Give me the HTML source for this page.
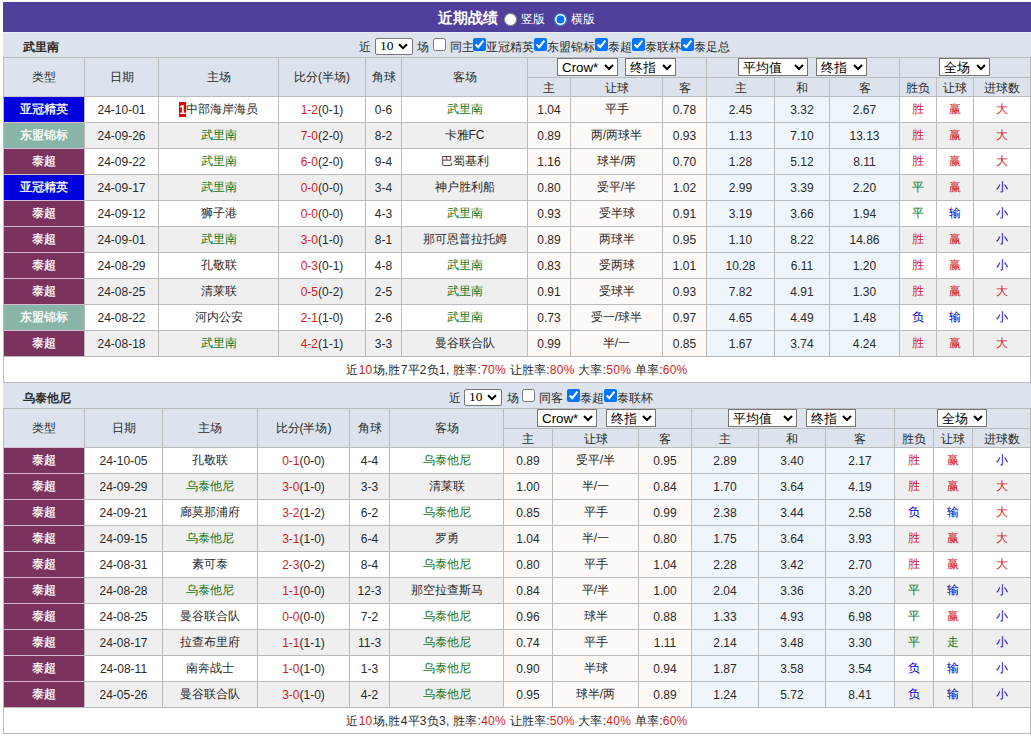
<!DOCTYPE html><html><head><meta charset="utf-8"><style>
html,body{margin:0;padding:0;}
body{width:1031px;height:736px;position:relative;overflow:hidden;background:#fff;font-family:"Liberation Sans",sans-serif;font-size:12px;color:#2a2a2a;font-weight:500;}
.a{position:absolute;}
.c{position:absolute;box-sizing:border-box;border:1px solid #bbb;display:flex;align-items:center;justify-content:center;white-space:nowrap;}
.s{position:absolute;box-sizing:border-box;margin:0;padding:0;font-family:"Liberation Sans",sans-serif;font-size:13.33px;background:#fff;color:#000;}
.k{position:absolute;margin:0;width:13px;height:13px;}
.d{padding-top:0px;}
.t{font-weight:500;-webkit-text-stroke:0.3px #fff;border-color:#d4bcd0 #e2e2ea #d4bcd0 #bbb;}
.rk{background:#e00;color:#fff;display:inline-block;width:7px;height:15px;line-height:16px;text-align:center;font-weight:bold;vertical-align:top;margin-top:1px;}
</style></head><body>
<div class="a" style="left:3px;top:2px;width:1028px;height:30px;background:#51409b;"></div>
<div class="a" style="left:3px;top:32px;width:1028px;height:1px;background:#e6e8f6;z-index:1;"></div>
<div class="a" style="left:438px;top:3px;height:30px;line-height:30px;color:#fff;font-weight:bold;font-size:15px;">近期战绩</div>
<div class="a" style="left:521px;top:4px;height:30px;line-height:31px;color:#fff;">竖版</div>
<div class="a" style="left:571px;top:4px;height:30px;line-height:31px;color:#fff;">横版</div>
<div class="a" style="left:3px;top:32px;width:1028px;height:25px;background:#dce3ec;"></div>
<div class="a" style="left:23px;top:32px;height:25px;line-height:31px;font-weight:bold;">武里南</div>
<div class="c" style="left:3px;top:57px;width:82px;height:40px;background:#dce3ec;"><span>类型</span></div>
<div class="c" style="left:84px;top:57px;width:75px;height:40px;background:#dce3ec;"><span>日期</span></div>
<div class="c" style="left:158px;top:57px;width:121px;height:40px;background:#dce3ec;"><span>主场</span></div>
<div class="c" style="left:278px;top:57px;width:88px;height:40px;background:#dce3ec;"><span>比分(半场)</span></div>
<div class="c" style="left:365px;top:57px;width:37px;height:40px;background:#dce3ec;"><span>角球</span></div>
<div class="c" style="left:401px;top:57px;width:127px;height:40px;background:#dce3ec;"><span>客场</span></div>
<div class="c" style="left:527px;top:57px;width:180px;height:21px;background:#dce3ec;"></div>
<div class="c" style="left:706px;top:57px;width:194px;height:21px;background:#dce3ec;"></div>
<div class="c" style="left:899px;top:57px;width:132px;height:21px;background:#dce3ec;"></div>
<div class="c" style="left:527px;top:77px;width:44px;height:20px;background:#dce3ec;padding-top:3px;"><span>主</span></div>
<div class="c" style="left:570px;top:77px;width:93px;height:20px;background:#dce3ec;padding-top:3px;"><span>让球</span></div>
<div class="c" style="left:662px;top:77px;width:45px;height:20px;background:#dce3ec;padding-top:3px;"><span>客</span></div>
<div class="c" style="left:706px;top:77px;width:69px;height:20px;background:#dce3ec;padding-top:3px;"><span>主</span></div>
<div class="c" style="left:774px;top:77px;width:56px;height:20px;background:#dce3ec;padding-top:3px;"><span>和</span></div>
<div class="c" style="left:829px;top:77px;width:71px;height:20px;background:#dce3ec;padding-top:3px;"><span>客</span></div>
<div class="c" style="left:899px;top:77px;width:38px;height:20px;background:#dce3ec;padding-top:3px;"><span>胜负</span></div>
<div class="c" style="left:936px;top:77px;width:38px;height:20px;background:#dce3ec;padding-top:3px;"><span>让球</span></div>
<div class="c" style="left:973px;top:77px;width:58px;height:20px;background:#dce3ec;padding-top:3px;"><span>进球数</span></div>
<div class="c t d" style="left:3px;top:96px;width:82px;height:27px;background:#0000dd;color:#fff;"><span>亚冠精英</span></div>
<div class="c d" style="left:84px;top:96px;width:75px;height:27px;background:#fff;"><span>24-10-01</span></div>
<div class="c d" style="left:158px;top:96px;width:121px;height:27px;background:#fff;"><span><span class="rk">1</span>中部海岸海员</span></div>
<div class="c d" style="left:278px;top:96px;width:88px;height:27px;background:#fff;"><span><span style="color:#d41a1a">1-2</span>(0-1)</span></div>
<div class="c d" style="left:365px;top:96px;width:37px;height:27px;background:#fff;"><span>0-6</span></div>
<div class="c d" style="left:401px;top:96px;width:127px;height:27px;background:#fff;color:#157315;"><span>武里南</span></div>
<div class="c d" style="left:527px;top:96px;width:44px;height:27px;background:#fdf9f6;"><span>1.04</span></div>
<div class="c d" style="left:570px;top:96px;width:93px;height:27px;background:#fdf9f6;"><span>平手</span></div>
<div class="c d" style="left:662px;top:96px;width:45px;height:27px;background:#fdf9f6;"><span>0.78</span></div>
<div class="c d" style="left:706px;top:96px;width:69px;height:27px;background:#eff6fb;"><span>2.45</span></div>
<div class="c d" style="left:774px;top:96px;width:56px;height:27px;background:#eff6fb;"><span>3.32</span></div>
<div class="c d" style="left:829px;top:96px;width:71px;height:27px;background:#eff6fb;"><span>2.67</span></div>
<div class="c d" style="left:899px;top:96px;width:38px;height:27px;background:#fff;color:#d41a1a;"><span>胜</span></div>
<div class="c d" style="left:936px;top:96px;width:38px;height:27px;background:#fff;color:#d41a1a;"><span>赢</span></div>
<div class="c d" style="left:973px;top:96px;width:58px;height:27px;background:#fff;color:#d41a1a;"><span>大</span></div>
<div class="c t d" style="left:3px;top:122px;width:82px;height:27px;background:#88b5a8;color:#fff;"><span>东盟锦标</span></div>
<div class="c d" style="left:84px;top:122px;width:75px;height:27px;background:#efefef;"><span>24-09-26</span></div>
<div class="c d" style="left:158px;top:122px;width:121px;height:27px;background:#efefef;color:#157315;"><span>武里南</span></div>
<div class="c d" style="left:278px;top:122px;width:88px;height:27px;background:#efefef;"><span><span style="color:#d41a1a">7-0</span>(2-0)</span></div>
<div class="c d" style="left:365px;top:122px;width:37px;height:27px;background:#efefef;"><span>8-2</span></div>
<div class="c d" style="left:401px;top:122px;width:127px;height:27px;background:#efefef;"><span>卡雅FC</span></div>
<div class="c d" style="left:527px;top:122px;width:44px;height:27px;background:#fdf9f6;"><span>0.89</span></div>
<div class="c d" style="left:570px;top:122px;width:93px;height:27px;background:#fdf9f6;"><span>两/两球半</span></div>
<div class="c d" style="left:662px;top:122px;width:45px;height:27px;background:#fdf9f6;"><span>0.93</span></div>
<div class="c d" style="left:706px;top:122px;width:69px;height:27px;background:#eff6fb;"><span>1.13</span></div>
<div class="c d" style="left:774px;top:122px;width:56px;height:27px;background:#eff6fb;"><span>7.10</span></div>
<div class="c d" style="left:829px;top:122px;width:71px;height:27px;background:#eff6fb;"><span>13.13</span></div>
<div class="c d" style="left:899px;top:122px;width:38px;height:27px;background:#efefef;color:#d41a1a;"><span>胜</span></div>
<div class="c d" style="left:936px;top:122px;width:38px;height:27px;background:#efefef;color:#d41a1a;"><span>赢</span></div>
<div class="c d" style="left:973px;top:122px;width:58px;height:27px;background:#efefef;color:#d41a1a;"><span>大</span></div>
<div class="c t d" style="left:3px;top:148px;width:82px;height:27px;background:#7b335e;color:#fff;"><span>泰超</span></div>
<div class="c d" style="left:84px;top:148px;width:75px;height:27px;background:#fff;"><span>24-09-22</span></div>
<div class="c d" style="left:158px;top:148px;width:121px;height:27px;background:#fff;color:#157315;"><span>武里南</span></div>
<div class="c d" style="left:278px;top:148px;width:88px;height:27px;background:#fff;"><span><span style="color:#d41a1a">6-0</span>(2-0)</span></div>
<div class="c d" style="left:365px;top:148px;width:37px;height:27px;background:#fff;"><span>9-4</span></div>
<div class="c d" style="left:401px;top:148px;width:127px;height:27px;background:#fff;"><span>巴蜀基利</span></div>
<div class="c d" style="left:527px;top:148px;width:44px;height:27px;background:#fdf9f6;"><span>1.16</span></div>
<div class="c d" style="left:570px;top:148px;width:93px;height:27px;background:#fdf9f6;"><span>球半/两</span></div>
<div class="c d" style="left:662px;top:148px;width:45px;height:27px;background:#fdf9f6;"><span>0.70</span></div>
<div class="c d" style="left:706px;top:148px;width:69px;height:27px;background:#eff6fb;"><span>1.28</span></div>
<div class="c d" style="left:774px;top:148px;width:56px;height:27px;background:#eff6fb;"><span>5.12</span></div>
<div class="c d" style="left:829px;top:148px;width:71px;height:27px;background:#eff6fb;"><span>8.11</span></div>
<div class="c d" style="left:899px;top:148px;width:38px;height:27px;background:#fff;color:#d41a1a;"><span>胜</span></div>
<div class="c d" style="left:936px;top:148px;width:38px;height:27px;background:#fff;color:#d41a1a;"><span>赢</span></div>
<div class="c d" style="left:973px;top:148px;width:58px;height:27px;background:#fff;color:#d41a1a;"><span>大</span></div>
<div class="c t d" style="left:3px;top:174px;width:82px;height:27px;background:#0000dd;color:#fff;"><span>亚冠精英</span></div>
<div class="c d" style="left:84px;top:174px;width:75px;height:27px;background:#efefef;"><span>24-09-17</span></div>
<div class="c d" style="left:158px;top:174px;width:121px;height:27px;background:#efefef;color:#157315;"><span>武里南</span></div>
<div class="c d" style="left:278px;top:174px;width:88px;height:27px;background:#efefef;"><span><span style="color:#d41a1a">0-0</span>(0-0)</span></div>
<div class="c d" style="left:365px;top:174px;width:37px;height:27px;background:#efefef;"><span>3-4</span></div>
<div class="c d" style="left:401px;top:174px;width:127px;height:27px;background:#efefef;"><span>神户胜利船</span></div>
<div class="c d" style="left:527px;top:174px;width:44px;height:27px;background:#fdf9f6;"><span>0.80</span></div>
<div class="c d" style="left:570px;top:174px;width:93px;height:27px;background:#fdf9f6;"><span>受平/半</span></div>
<div class="c d" style="left:662px;top:174px;width:45px;height:27px;background:#fdf9f6;"><span>1.02</span></div>
<div class="c d" style="left:706px;top:174px;width:69px;height:27px;background:#eff6fb;"><span>2.99</span></div>
<div class="c d" style="left:774px;top:174px;width:56px;height:27px;background:#eff6fb;"><span>3.39</span></div>
<div class="c d" style="left:829px;top:174px;width:71px;height:27px;background:#eff6fb;"><span>2.20</span></div>
<div class="c d" style="left:899px;top:174px;width:38px;height:27px;background:#efefef;color:#157315;"><span>平</span></div>
<div class="c d" style="left:936px;top:174px;width:38px;height:27px;background:#efefef;color:#d41a1a;"><span>赢</span></div>
<div class="c d" style="left:973px;top:174px;width:58px;height:27px;background:#efefef;color:#0000cc;"><span>小</span></div>
<div class="c t d" style="left:3px;top:200px;width:82px;height:27px;background:#7b335e;color:#fff;"><span>泰超</span></div>
<div class="c d" style="left:84px;top:200px;width:75px;height:27px;background:#fff;"><span>24-09-12</span></div>
<div class="c d" style="left:158px;top:200px;width:121px;height:27px;background:#fff;"><span>狮子港</span></div>
<div class="c d" style="left:278px;top:200px;width:88px;height:27px;background:#fff;"><span><span style="color:#d41a1a">0-0</span>(0-0)</span></div>
<div class="c d" style="left:365px;top:200px;width:37px;height:27px;background:#fff;"><span>4-3</span></div>
<div class="c d" style="left:401px;top:200px;width:127px;height:27px;background:#fff;color:#157315;"><span>武里南</span></div>
<div class="c d" style="left:527px;top:200px;width:44px;height:27px;background:#fdf9f6;"><span>0.93</span></div>
<div class="c d" style="left:570px;top:200px;width:93px;height:27px;background:#fdf9f6;"><span>受半球</span></div>
<div class="c d" style="left:662px;top:200px;width:45px;height:27px;background:#fdf9f6;"><span>0.91</span></div>
<div class="c d" style="left:706px;top:200px;width:69px;height:27px;background:#eff6fb;"><span>3.19</span></div>
<div class="c d" style="left:774px;top:200px;width:56px;height:27px;background:#eff6fb;"><span>3.66</span></div>
<div class="c d" style="left:829px;top:200px;width:71px;height:27px;background:#eff6fb;"><span>1.94</span></div>
<div class="c d" style="left:899px;top:200px;width:38px;height:27px;background:#fff;color:#157315;"><span>平</span></div>
<div class="c d" style="left:936px;top:200px;width:38px;height:27px;background:#fff;color:#0000cc;"><span>输</span></div>
<div class="c d" style="left:973px;top:200px;width:58px;height:27px;background:#fff;color:#0000cc;"><span>小</span></div>
<div class="c t d" style="left:3px;top:226px;width:82px;height:27px;background:#7b335e;color:#fff;"><span>泰超</span></div>
<div class="c d" style="left:84px;top:226px;width:75px;height:27px;background:#efefef;"><span>24-09-01</span></div>
<div class="c d" style="left:158px;top:226px;width:121px;height:27px;background:#efefef;color:#157315;"><span>武里南</span></div>
<div class="c d" style="left:278px;top:226px;width:88px;height:27px;background:#efefef;"><span><span style="color:#d41a1a">3-0</span>(1-0)</span></div>
<div class="c d" style="left:365px;top:226px;width:37px;height:27px;background:#efefef;"><span>8-1</span></div>
<div class="c d" style="left:401px;top:226px;width:127px;height:27px;background:#efefef;"><span>那可恩普拉托姆</span></div>
<div class="c d" style="left:527px;top:226px;width:44px;height:27px;background:#fdf9f6;"><span>0.89</span></div>
<div class="c d" style="left:570px;top:226px;width:93px;height:27px;background:#fdf9f6;"><span>两球半</span></div>
<div class="c d" style="left:662px;top:226px;width:45px;height:27px;background:#fdf9f6;"><span>0.95</span></div>
<div class="c d" style="left:706px;top:226px;width:69px;height:27px;background:#eff6fb;"><span>1.10</span></div>
<div class="c d" style="left:774px;top:226px;width:56px;height:27px;background:#eff6fb;"><span>8.22</span></div>
<div class="c d" style="left:829px;top:226px;width:71px;height:27px;background:#eff6fb;"><span>14.86</span></div>
<div class="c d" style="left:899px;top:226px;width:38px;height:27px;background:#efefef;color:#d41a1a;"><span>胜</span></div>
<div class="c d" style="left:936px;top:226px;width:38px;height:27px;background:#efefef;color:#d41a1a;"><span>赢</span></div>
<div class="c d" style="left:973px;top:226px;width:58px;height:27px;background:#efefef;color:#0000cc;"><span>小</span></div>
<div class="c t d" style="left:3px;top:252px;width:82px;height:27px;background:#7b335e;color:#fff;"><span>泰超</span></div>
<div class="c d" style="left:84px;top:252px;width:75px;height:27px;background:#fff;"><span>24-08-29</span></div>
<div class="c d" style="left:158px;top:252px;width:121px;height:27px;background:#fff;"><span>孔敬联</span></div>
<div class="c d" style="left:278px;top:252px;width:88px;height:27px;background:#fff;"><span><span style="color:#d41a1a">0-3</span>(0-1)</span></div>
<div class="c d" style="left:365px;top:252px;width:37px;height:27px;background:#fff;"><span>4-8</span></div>
<div class="c d" style="left:401px;top:252px;width:127px;height:27px;background:#fff;color:#157315;"><span>武里南</span></div>
<div class="c d" style="left:527px;top:252px;width:44px;height:27px;background:#fdf9f6;"><span>0.83</span></div>
<div class="c d" style="left:570px;top:252px;width:93px;height:27px;background:#fdf9f6;"><span>受两球</span></div>
<div class="c d" style="left:662px;top:252px;width:45px;height:27px;background:#fdf9f6;"><span>1.01</span></div>
<div class="c d" style="left:706px;top:252px;width:69px;height:27px;background:#eff6fb;"><span>10.28</span></div>
<div class="c d" style="left:774px;top:252px;width:56px;height:27px;background:#eff6fb;"><span>6.11</span></div>
<div class="c d" style="left:829px;top:252px;width:71px;height:27px;background:#eff6fb;"><span>1.20</span></div>
<div class="c d" style="left:899px;top:252px;width:38px;height:27px;background:#fff;color:#d41a1a;"><span>胜</span></div>
<div class="c d" style="left:936px;top:252px;width:38px;height:27px;background:#fff;color:#d41a1a;"><span>赢</span></div>
<div class="c d" style="left:973px;top:252px;width:58px;height:27px;background:#fff;color:#0000cc;"><span>小</span></div>
<div class="c t d" style="left:3px;top:278px;width:82px;height:27px;background:#7b335e;color:#fff;"><span>泰超</span></div>
<div class="c d" style="left:84px;top:278px;width:75px;height:27px;background:#efefef;"><span>24-08-25</span></div>
<div class="c d" style="left:158px;top:278px;width:121px;height:27px;background:#efefef;"><span>清莱联</span></div>
<div class="c d" style="left:278px;top:278px;width:88px;height:27px;background:#efefef;"><span><span style="color:#d41a1a">0-5</span>(0-2)</span></div>
<div class="c d" style="left:365px;top:278px;width:37px;height:27px;background:#efefef;"><span>2-5</span></div>
<div class="c d" style="left:401px;top:278px;width:127px;height:27px;background:#efefef;color:#157315;"><span>武里南</span></div>
<div class="c d" style="left:527px;top:278px;width:44px;height:27px;background:#fdf9f6;"><span>0.91</span></div>
<div class="c d" style="left:570px;top:278px;width:93px;height:27px;background:#fdf9f6;"><span>受球半</span></div>
<div class="c d" style="left:662px;top:278px;width:45px;height:27px;background:#fdf9f6;"><span>0.93</span></div>
<div class="c d" style="left:706px;top:278px;width:69px;height:27px;background:#eff6fb;"><span>7.82</span></div>
<div class="c d" style="left:774px;top:278px;width:56px;height:27px;background:#eff6fb;"><span>4.91</span></div>
<div class="c d" style="left:829px;top:278px;width:71px;height:27px;background:#eff6fb;"><span>1.30</span></div>
<div class="c d" style="left:899px;top:278px;width:38px;height:27px;background:#efefef;color:#d41a1a;"><span>胜</span></div>
<div class="c d" style="left:936px;top:278px;width:38px;height:27px;background:#efefef;color:#d41a1a;"><span>赢</span></div>
<div class="c d" style="left:973px;top:278px;width:58px;height:27px;background:#efefef;color:#d41a1a;"><span>大</span></div>
<div class="c t d" style="left:3px;top:304px;width:82px;height:27px;background:#88b5a8;color:#fff;"><span>东盟锦标</span></div>
<div class="c d" style="left:84px;top:304px;width:75px;height:27px;background:#fff;"><span>24-08-22</span></div>
<div class="c d" style="left:158px;top:304px;width:121px;height:27px;background:#fff;"><span>河内公安</span></div>
<div class="c d" style="left:278px;top:304px;width:88px;height:27px;background:#fff;"><span><span style="color:#d41a1a">2-1</span>(1-0)</span></div>
<div class="c d" style="left:365px;top:304px;width:37px;height:27px;background:#fff;"><span>2-6</span></div>
<div class="c d" style="left:401px;top:304px;width:127px;height:27px;background:#fff;color:#157315;"><span>武里南</span></div>
<div class="c d" style="left:527px;top:304px;width:44px;height:27px;background:#fdf9f6;"><span>0.73</span></div>
<div class="c d" style="left:570px;top:304px;width:93px;height:27px;background:#fdf9f6;"><span>受一/球半</span></div>
<div class="c d" style="left:662px;top:304px;width:45px;height:27px;background:#fdf9f6;"><span>0.97</span></div>
<div class="c d" style="left:706px;top:304px;width:69px;height:27px;background:#eff6fb;"><span>4.65</span></div>
<div class="c d" style="left:774px;top:304px;width:56px;height:27px;background:#eff6fb;"><span>4.49</span></div>
<div class="c d" style="left:829px;top:304px;width:71px;height:27px;background:#eff6fb;"><span>1.48</span></div>
<div class="c d" style="left:899px;top:304px;width:38px;height:27px;background:#fff;color:#0000cc;"><span>负</span></div>
<div class="c d" style="left:936px;top:304px;width:38px;height:27px;background:#fff;color:#0000cc;"><span>输</span></div>
<div class="c d" style="left:973px;top:304px;width:58px;height:27px;background:#fff;color:#0000cc;"><span>小</span></div>
<div class="c t d" style="left:3px;top:330px;width:82px;height:27px;background:#7b335e;color:#fff;"><span>泰超</span></div>
<div class="c d" style="left:84px;top:330px;width:75px;height:27px;background:#efefef;"><span>24-08-18</span></div>
<div class="c d" style="left:158px;top:330px;width:121px;height:27px;background:#efefef;color:#157315;"><span>武里南</span></div>
<div class="c d" style="left:278px;top:330px;width:88px;height:27px;background:#efefef;"><span><span style="color:#d41a1a">4-2</span>(1-1)</span></div>
<div class="c d" style="left:365px;top:330px;width:37px;height:27px;background:#efefef;"><span>3-3</span></div>
<div class="c d" style="left:401px;top:330px;width:127px;height:27px;background:#efefef;"><span>曼谷联合队</span></div>
<div class="c d" style="left:527px;top:330px;width:44px;height:27px;background:#fdf9f6;"><span>0.99</span></div>
<div class="c d" style="left:570px;top:330px;width:93px;height:27px;background:#fdf9f6;"><span>半/一</span></div>
<div class="c d" style="left:662px;top:330px;width:45px;height:27px;background:#fdf9f6;"><span>0.85</span></div>
<div class="c d" style="left:706px;top:330px;width:69px;height:27px;background:#eff6fb;"><span>1.67</span></div>
<div class="c d" style="left:774px;top:330px;width:56px;height:27px;background:#eff6fb;"><span>3.74</span></div>
<div class="c d" style="left:829px;top:330px;width:71px;height:27px;background:#eff6fb;"><span>4.24</span></div>
<div class="c d" style="left:899px;top:330px;width:38px;height:27px;background:#efefef;color:#d41a1a;"><span>胜</span></div>
<div class="c d" style="left:936px;top:330px;width:38px;height:27px;background:#efefef;color:#d41a1a;"><span>赢</span></div>
<div class="c d" style="left:973px;top:330px;width:58px;height:27px;background:#efefef;color:#d41a1a;"><span>大</span></div>
<div class="c" style="left:3px;top:356px;width:1028px;height:27px;background:#fff;letter-spacing:0.25px;padding-top:2px;"><span>近<span style="color:#d41a1a">10</span>场,胜7平2负1, 胜率:<span style="color:#d41a1a">70%</span> 让胜率:<span style="color:#d41a1a">80%</span> 大率:<span style="color:#d41a1a">50%</span> 单率:<span style="color:#d41a1a">60%</span></span></div>
<div class="a" style="left:3px;top:383px;width:1028px;height:25px;background:#dce3ec;"></div>
<div class="a" style="left:23px;top:383px;height:25px;line-height:31px;font-weight:bold;">乌泰他尼</div>
<div class="c" style="left:3px;top:408px;width:82px;height:40px;background:#dce3ec;"><span>类型</span></div>
<div class="c" style="left:84px;top:408px;width:79px;height:40px;background:#dce3ec;"><span>日期</span></div>
<div class="c" style="left:162px;top:408px;width:96px;height:40px;background:#dce3ec;"><span>主场</span></div>
<div class="c" style="left:257px;top:408px;width:93px;height:40px;background:#dce3ec;"><span>比分(半场)</span></div>
<div class="c" style="left:349px;top:408px;width:41px;height:40px;background:#dce3ec;"><span>角球</span></div>
<div class="c" style="left:389px;top:408px;width:115px;height:40px;background:#dce3ec;"><span>客场</span></div>
<div class="c" style="left:503px;top:408px;width:189px;height:21px;background:#dce3ec;"></div>
<div class="c" style="left:691px;top:408px;width:204px;height:21px;background:#dce3ec;"></div>
<div class="c" style="left:894px;top:408px;width:137px;height:21px;background:#dce3ec;"></div>
<div class="c" style="left:503px;top:428px;width:50px;height:20px;background:#dce3ec;padding-top:3px;"><span>主</span></div>
<div class="c" style="left:552px;top:428px;width:87px;height:20px;background:#dce3ec;padding-top:3px;"><span>让球</span></div>
<div class="c" style="left:638px;top:428px;width:54px;height:20px;background:#dce3ec;padding-top:3px;"><span>客</span></div>
<div class="c" style="left:691px;top:428px;width:68px;height:20px;background:#dce3ec;padding-top:3px;"><span>主</span></div>
<div class="c" style="left:758px;top:428px;width:68px;height:20px;background:#dce3ec;padding-top:3px;"><span>和</span></div>
<div class="c" style="left:825px;top:428px;width:70px;height:20px;background:#dce3ec;padding-top:3px;"><span>客</span></div>
<div class="c" style="left:894px;top:428px;width:40px;height:20px;background:#dce3ec;padding-top:3px;"><span>胜负</span></div>
<div class="c" style="left:933px;top:428px;width:40px;height:20px;background:#dce3ec;padding-top:3px;"><span>让球</span></div>
<div class="c" style="left:972px;top:428px;width:59px;height:20px;background:#dce3ec;padding-top:3px;"><span>进球数</span></div>
<div class="c t d" style="left:3px;top:447px;width:82px;height:27px;background:#7b335e;color:#fff;"><span>泰超</span></div>
<div class="c d" style="left:84px;top:447px;width:79px;height:27px;background:#fff;"><span>24-10-05</span></div>
<div class="c d" style="left:162px;top:447px;width:96px;height:27px;background:#fff;"><span>孔敬联</span></div>
<div class="c d" style="left:257px;top:447px;width:93px;height:27px;background:#fff;"><span><span style="color:#d41a1a">0-1</span>(0-0)</span></div>
<div class="c d" style="left:349px;top:447px;width:41px;height:27px;background:#fff;"><span>4-4</span></div>
<div class="c d" style="left:389px;top:447px;width:115px;height:27px;background:#fff;color:#157315;"><span>乌泰他尼</span></div>
<div class="c d" style="left:503px;top:447px;width:50px;height:27px;background:#fdf9f6;"><span>0.89</span></div>
<div class="c d" style="left:552px;top:447px;width:87px;height:27px;background:#fdf9f6;"><span>受平/半</span></div>
<div class="c d" style="left:638px;top:447px;width:54px;height:27px;background:#fdf9f6;"><span>0.95</span></div>
<div class="c d" style="left:691px;top:447px;width:68px;height:27px;background:#eff6fb;"><span>2.89</span></div>
<div class="c d" style="left:758px;top:447px;width:68px;height:27px;background:#eff6fb;"><span>3.40</span></div>
<div class="c d" style="left:825px;top:447px;width:70px;height:27px;background:#eff6fb;"><span>2.17</span></div>
<div class="c d" style="left:894px;top:447px;width:40px;height:27px;background:#fff;color:#d41a1a;"><span>胜</span></div>
<div class="c d" style="left:933px;top:447px;width:40px;height:27px;background:#fff;color:#d41a1a;"><span>赢</span></div>
<div class="c d" style="left:972px;top:447px;width:59px;height:27px;background:#fff;color:#0000cc;"><span>小</span></div>
<div class="c t d" style="left:3px;top:473px;width:82px;height:27px;background:#7b335e;color:#fff;"><span>泰超</span></div>
<div class="c d" style="left:84px;top:473px;width:79px;height:27px;background:#efefef;"><span>24-09-29</span></div>
<div class="c d" style="left:162px;top:473px;width:96px;height:27px;background:#efefef;color:#157315;"><span>乌泰他尼</span></div>
<div class="c d" style="left:257px;top:473px;width:93px;height:27px;background:#efefef;"><span><span style="color:#d41a1a">3-0</span>(1-0)</span></div>
<div class="c d" style="left:349px;top:473px;width:41px;height:27px;background:#efefef;"><span>3-3</span></div>
<div class="c d" style="left:389px;top:473px;width:115px;height:27px;background:#efefef;"><span>清莱联</span></div>
<div class="c d" style="left:503px;top:473px;width:50px;height:27px;background:#fdf9f6;"><span>1.00</span></div>
<div class="c d" style="left:552px;top:473px;width:87px;height:27px;background:#fdf9f6;"><span>半/一</span></div>
<div class="c d" style="left:638px;top:473px;width:54px;height:27px;background:#fdf9f6;"><span>0.84</span></div>
<div class="c d" style="left:691px;top:473px;width:68px;height:27px;background:#eff6fb;"><span>1.70</span></div>
<div class="c d" style="left:758px;top:473px;width:68px;height:27px;background:#eff6fb;"><span>3.64</span></div>
<div class="c d" style="left:825px;top:473px;width:70px;height:27px;background:#eff6fb;"><span>4.19</span></div>
<div class="c d" style="left:894px;top:473px;width:40px;height:27px;background:#efefef;color:#d41a1a;"><span>胜</span></div>
<div class="c d" style="left:933px;top:473px;width:40px;height:27px;background:#efefef;color:#d41a1a;"><span>赢</span></div>
<div class="c d" style="left:972px;top:473px;width:59px;height:27px;background:#efefef;color:#d41a1a;"><span>大</span></div>
<div class="c t d" style="left:3px;top:499px;width:82px;height:27px;background:#7b335e;color:#fff;"><span>泰超</span></div>
<div class="c d" style="left:84px;top:499px;width:79px;height:27px;background:#fff;"><span>24-09-21</span></div>
<div class="c d" style="left:162px;top:499px;width:96px;height:27px;background:#fff;"><span>廊莫那浦府</span></div>
<div class="c d" style="left:257px;top:499px;width:93px;height:27px;background:#fff;"><span><span style="color:#d41a1a">3-2</span>(1-2)</span></div>
<div class="c d" style="left:349px;top:499px;width:41px;height:27px;background:#fff;"><span>6-2</span></div>
<div class="c d" style="left:389px;top:499px;width:115px;height:27px;background:#fff;color:#157315;"><span>乌泰他尼</span></div>
<div class="c d" style="left:503px;top:499px;width:50px;height:27px;background:#fdf9f6;"><span>0.85</span></div>
<div class="c d" style="left:552px;top:499px;width:87px;height:27px;background:#fdf9f6;"><span>平手</span></div>
<div class="c d" style="left:638px;top:499px;width:54px;height:27px;background:#fdf9f6;"><span>0.99</span></div>
<div class="c d" style="left:691px;top:499px;width:68px;height:27px;background:#eff6fb;"><span>2.38</span></div>
<div class="c d" style="left:758px;top:499px;width:68px;height:27px;background:#eff6fb;"><span>3.44</span></div>
<div class="c d" style="left:825px;top:499px;width:70px;height:27px;background:#eff6fb;"><span>2.58</span></div>
<div class="c d" style="left:894px;top:499px;width:40px;height:27px;background:#fff;color:#0000cc;"><span>负</span></div>
<div class="c d" style="left:933px;top:499px;width:40px;height:27px;background:#fff;color:#0000cc;"><span>输</span></div>
<div class="c d" style="left:972px;top:499px;width:59px;height:27px;background:#fff;color:#d41a1a;"><span>大</span></div>
<div class="c t d" style="left:3px;top:525px;width:82px;height:27px;background:#7b335e;color:#fff;"><span>泰超</span></div>
<div class="c d" style="left:84px;top:525px;width:79px;height:27px;background:#efefef;"><span>24-09-15</span></div>
<div class="c d" style="left:162px;top:525px;width:96px;height:27px;background:#efefef;color:#157315;"><span>乌泰他尼</span></div>
<div class="c d" style="left:257px;top:525px;width:93px;height:27px;background:#efefef;"><span><span style="color:#d41a1a">3-1</span>(1-0)</span></div>
<div class="c d" style="left:349px;top:525px;width:41px;height:27px;background:#efefef;"><span>6-4</span></div>
<div class="c d" style="left:389px;top:525px;width:115px;height:27px;background:#efefef;"><span>罗勇</span></div>
<div class="c d" style="left:503px;top:525px;width:50px;height:27px;background:#fdf9f6;"><span>1.04</span></div>
<div class="c d" style="left:552px;top:525px;width:87px;height:27px;background:#fdf9f6;"><span>半/一</span></div>
<div class="c d" style="left:638px;top:525px;width:54px;height:27px;background:#fdf9f6;"><span>0.80</span></div>
<div class="c d" style="left:691px;top:525px;width:68px;height:27px;background:#eff6fb;"><span>1.75</span></div>
<div class="c d" style="left:758px;top:525px;width:68px;height:27px;background:#eff6fb;"><span>3.64</span></div>
<div class="c d" style="left:825px;top:525px;width:70px;height:27px;background:#eff6fb;"><span>3.93</span></div>
<div class="c d" style="left:894px;top:525px;width:40px;height:27px;background:#efefef;color:#d41a1a;"><span>胜</span></div>
<div class="c d" style="left:933px;top:525px;width:40px;height:27px;background:#efefef;color:#d41a1a;"><span>赢</span></div>
<div class="c d" style="left:972px;top:525px;width:59px;height:27px;background:#efefef;color:#d41a1a;"><span>大</span></div>
<div class="c t d" style="left:3px;top:551px;width:82px;height:27px;background:#7b335e;color:#fff;"><span>泰超</span></div>
<div class="c d" style="left:84px;top:551px;width:79px;height:27px;background:#fff;"><span>24-08-31</span></div>
<div class="c d" style="left:162px;top:551px;width:96px;height:27px;background:#fff;"><span>素可泰</span></div>
<div class="c d" style="left:257px;top:551px;width:93px;height:27px;background:#fff;"><span><span style="color:#d41a1a">2-3</span>(0-2)</span></div>
<div class="c d" style="left:349px;top:551px;width:41px;height:27px;background:#fff;"><span>8-4</span></div>
<div class="c d" style="left:389px;top:551px;width:115px;height:27px;background:#fff;color:#157315;"><span>乌泰他尼</span></div>
<div class="c d" style="left:503px;top:551px;width:50px;height:27px;background:#fdf9f6;"><span>0.80</span></div>
<div class="c d" style="left:552px;top:551px;width:87px;height:27px;background:#fdf9f6;"><span>平手</span></div>
<div class="c d" style="left:638px;top:551px;width:54px;height:27px;background:#fdf9f6;"><span>1.04</span></div>
<div class="c d" style="left:691px;top:551px;width:68px;height:27px;background:#eff6fb;"><span>2.28</span></div>
<div class="c d" style="left:758px;top:551px;width:68px;height:27px;background:#eff6fb;"><span>3.42</span></div>
<div class="c d" style="left:825px;top:551px;width:70px;height:27px;background:#eff6fb;"><span>2.70</span></div>
<div class="c d" style="left:894px;top:551px;width:40px;height:27px;background:#fff;color:#d41a1a;"><span>胜</span></div>
<div class="c d" style="left:933px;top:551px;width:40px;height:27px;background:#fff;color:#d41a1a;"><span>赢</span></div>
<div class="c d" style="left:972px;top:551px;width:59px;height:27px;background:#fff;color:#d41a1a;"><span>大</span></div>
<div class="c t d" style="left:3px;top:577px;width:82px;height:27px;background:#7b335e;color:#fff;"><span>泰超</span></div>
<div class="c d" style="left:84px;top:577px;width:79px;height:27px;background:#efefef;"><span>24-08-28</span></div>
<div class="c d" style="left:162px;top:577px;width:96px;height:27px;background:#efefef;color:#157315;"><span>乌泰他尼</span></div>
<div class="c d" style="left:257px;top:577px;width:93px;height:27px;background:#efefef;"><span><span style="color:#d41a1a">1-1</span>(0-0)</span></div>
<div class="c d" style="left:349px;top:577px;width:41px;height:27px;background:#efefef;"><span>12-3</span></div>
<div class="c d" style="left:389px;top:577px;width:115px;height:27px;background:#efefef;"><span>那空拉查斯马</span></div>
<div class="c d" style="left:503px;top:577px;width:50px;height:27px;background:#fdf9f6;"><span>0.84</span></div>
<div class="c d" style="left:552px;top:577px;width:87px;height:27px;background:#fdf9f6;"><span>平/半</span></div>
<div class="c d" style="left:638px;top:577px;width:54px;height:27px;background:#fdf9f6;"><span>1.00</span></div>
<div class="c d" style="left:691px;top:577px;width:68px;height:27px;background:#eff6fb;"><span>2.04</span></div>
<div class="c d" style="left:758px;top:577px;width:68px;height:27px;background:#eff6fb;"><span>3.36</span></div>
<div class="c d" style="left:825px;top:577px;width:70px;height:27px;background:#eff6fb;"><span>3.20</span></div>
<div class="c d" style="left:894px;top:577px;width:40px;height:27px;background:#efefef;color:#157315;"><span>平</span></div>
<div class="c d" style="left:933px;top:577px;width:40px;height:27px;background:#efefef;color:#0000cc;"><span>输</span></div>
<div class="c d" style="left:972px;top:577px;width:59px;height:27px;background:#efefef;color:#0000cc;"><span>小</span></div>
<div class="c t d" style="left:3px;top:603px;width:82px;height:27px;background:#7b335e;color:#fff;"><span>泰超</span></div>
<div class="c d" style="left:84px;top:603px;width:79px;height:27px;background:#fff;"><span>24-08-25</span></div>
<div class="c d" style="left:162px;top:603px;width:96px;height:27px;background:#fff;"><span>曼谷联合队</span></div>
<div class="c d" style="left:257px;top:603px;width:93px;height:27px;background:#fff;"><span><span style="color:#d41a1a">0-0</span>(0-0)</span></div>
<div class="c d" style="left:349px;top:603px;width:41px;height:27px;background:#fff;"><span>7-2</span></div>
<div class="c d" style="left:389px;top:603px;width:115px;height:27px;background:#fff;color:#157315;"><span>乌泰他尼</span></div>
<div class="c d" style="left:503px;top:603px;width:50px;height:27px;background:#fdf9f6;"><span>0.96</span></div>
<div class="c d" style="left:552px;top:603px;width:87px;height:27px;background:#fdf9f6;"><span>球半</span></div>
<div class="c d" style="left:638px;top:603px;width:54px;height:27px;background:#fdf9f6;"><span>0.88</span></div>
<div class="c d" style="left:691px;top:603px;width:68px;height:27px;background:#eff6fb;"><span>1.33</span></div>
<div class="c d" style="left:758px;top:603px;width:68px;height:27px;background:#eff6fb;"><span>4.93</span></div>
<div class="c d" style="left:825px;top:603px;width:70px;height:27px;background:#eff6fb;"><span>6.98</span></div>
<div class="c d" style="left:894px;top:603px;width:40px;height:27px;background:#fff;color:#157315;"><span>平</span></div>
<div class="c d" style="left:933px;top:603px;width:40px;height:27px;background:#fff;color:#d41a1a;"><span>赢</span></div>
<div class="c d" style="left:972px;top:603px;width:59px;height:27px;background:#fff;color:#0000cc;"><span>小</span></div>
<div class="c t d" style="left:3px;top:629px;width:82px;height:27px;background:#7b335e;color:#fff;"><span>泰超</span></div>
<div class="c d" style="left:84px;top:629px;width:79px;height:27px;background:#efefef;"><span>24-08-17</span></div>
<div class="c d" style="left:162px;top:629px;width:96px;height:27px;background:#efefef;"><span>拉查布里府</span></div>
<div class="c d" style="left:257px;top:629px;width:93px;height:27px;background:#efefef;"><span><span style="color:#d41a1a">1-1</span>(1-1)</span></div>
<div class="c d" style="left:349px;top:629px;width:41px;height:27px;background:#efefef;"><span>11-3</span></div>
<div class="c d" style="left:389px;top:629px;width:115px;height:27px;background:#efefef;color:#157315;"><span>乌泰他尼</span></div>
<div class="c d" style="left:503px;top:629px;width:50px;height:27px;background:#fdf9f6;"><span>0.74</span></div>
<div class="c d" style="left:552px;top:629px;width:87px;height:27px;background:#fdf9f6;"><span>平手</span></div>
<div class="c d" style="left:638px;top:629px;width:54px;height:27px;background:#fdf9f6;"><span>1.11</span></div>
<div class="c d" style="left:691px;top:629px;width:68px;height:27px;background:#eff6fb;"><span>2.14</span></div>
<div class="c d" style="left:758px;top:629px;width:68px;height:27px;background:#eff6fb;"><span>3.48</span></div>
<div class="c d" style="left:825px;top:629px;width:70px;height:27px;background:#eff6fb;"><span>3.30</span></div>
<div class="c d" style="left:894px;top:629px;width:40px;height:27px;background:#efefef;color:#157315;"><span>平</span></div>
<div class="c d" style="left:933px;top:629px;width:40px;height:27px;background:#efefef;color:#157315;"><span>走</span></div>
<div class="c d" style="left:972px;top:629px;width:59px;height:27px;background:#efefef;color:#0000cc;"><span>小</span></div>
<div class="c t d" style="left:3px;top:655px;width:82px;height:27px;background:#7b335e;color:#fff;"><span>泰超</span></div>
<div class="c d" style="left:84px;top:655px;width:79px;height:27px;background:#fff;"><span>24-08-11</span></div>
<div class="c d" style="left:162px;top:655px;width:96px;height:27px;background:#fff;"><span>南奔战士</span></div>
<div class="c d" style="left:257px;top:655px;width:93px;height:27px;background:#fff;"><span><span style="color:#d41a1a">1-0</span>(1-0)</span></div>
<div class="c d" style="left:349px;top:655px;width:41px;height:27px;background:#fff;"><span>1-3</span></div>
<div class="c d" style="left:389px;top:655px;width:115px;height:27px;background:#fff;color:#157315;"><span>乌泰他尼</span></div>
<div class="c d" style="left:503px;top:655px;width:50px;height:27px;background:#fdf9f6;"><span>0.90</span></div>
<div class="c d" style="left:552px;top:655px;width:87px;height:27px;background:#fdf9f6;"><span>半球</span></div>
<div class="c d" style="left:638px;top:655px;width:54px;height:27px;background:#fdf9f6;"><span>0.94</span></div>
<div class="c d" style="left:691px;top:655px;width:68px;height:27px;background:#eff6fb;"><span>1.87</span></div>
<div class="c d" style="left:758px;top:655px;width:68px;height:27px;background:#eff6fb;"><span>3.58</span></div>
<div class="c d" style="left:825px;top:655px;width:70px;height:27px;background:#eff6fb;"><span>3.54</span></div>
<div class="c d" style="left:894px;top:655px;width:40px;height:27px;background:#fff;color:#0000cc;"><span>负</span></div>
<div class="c d" style="left:933px;top:655px;width:40px;height:27px;background:#fff;color:#0000cc;"><span>输</span></div>
<div class="c d" style="left:972px;top:655px;width:59px;height:27px;background:#fff;color:#0000cc;"><span>小</span></div>
<div class="c t d" style="left:3px;top:681px;width:82px;height:27px;background:#7b335e;color:#fff;"><span>泰超</span></div>
<div class="c d" style="left:84px;top:681px;width:79px;height:27px;background:#efefef;"><span>24-05-26</span></div>
<div class="c d" style="left:162px;top:681px;width:96px;height:27px;background:#efefef;"><span>曼谷联合队</span></div>
<div class="c d" style="left:257px;top:681px;width:93px;height:27px;background:#efefef;"><span><span style="color:#d41a1a">3-0</span>(1-0)</span></div>
<div class="c d" style="left:349px;top:681px;width:41px;height:27px;background:#efefef;"><span>4-2</span></div>
<div class="c d" style="left:389px;top:681px;width:115px;height:27px;background:#efefef;color:#157315;"><span>乌泰他尼</span></div>
<div class="c d" style="left:503px;top:681px;width:50px;height:27px;background:#fdf9f6;"><span>0.95</span></div>
<div class="c d" style="left:552px;top:681px;width:87px;height:27px;background:#fdf9f6;"><span>球半/两</span></div>
<div class="c d" style="left:638px;top:681px;width:54px;height:27px;background:#fdf9f6;"><span>0.89</span></div>
<div class="c d" style="left:691px;top:681px;width:68px;height:27px;background:#eff6fb;"><span>1.24</span></div>
<div class="c d" style="left:758px;top:681px;width:68px;height:27px;background:#eff6fb;"><span>5.72</span></div>
<div class="c d" style="left:825px;top:681px;width:70px;height:27px;background:#eff6fb;"><span>8.41</span></div>
<div class="c d" style="left:894px;top:681px;width:40px;height:27px;background:#efefef;color:#0000cc;"><span>负</span></div>
<div class="c d" style="left:933px;top:681px;width:40px;height:27px;background:#efefef;color:#0000cc;"><span>输</span></div>
<div class="c d" style="left:972px;top:681px;width:59px;height:27px;background:#efefef;color:#0000cc;"><span>小</span></div>
<div class="c" style="left:3px;top:707px;width:1028px;height:27px;background:#fff;letter-spacing:0.25px;padding-top:2px;"><span>近<span style="color:#d41a1a">10</span>场,胜4平3负3, 胜率:<span style="color:#d41a1a">40%</span> 让胜率:<span style="color:#d41a1a">50%</span> 大率:<span style="color:#d41a1a">40%</span> 单率:<span style="color:#d41a1a">60%</span></span></div>
<input type="radio" class="k" style="left:504px;top:13px;">
<input type="radio" class="k" style="left:554px;top:13px;" checked>
<div class="a" style="left:359px;top:40px;line-height:14px;">近</div>
<div class="a" style="left:375px;top:38px;width:38px;height:17px;box-sizing:border-box;border:1px solid #767676;border-radius:2px;background:#fff;"></div>
<div class="a" style="left:380px;top:38px;height:15px;line-height:15px;font-family:Liberation Serif;font-size:13.5px;color:#000;font-weight:normal;">10</div>
<svg class="a" style="left:398px;top:43px;" width="10" height="7" viewBox="0 0 10 7"><polyline points="1,1.2 5,5.2 9,1.2" fill="none" stroke="#000" stroke-width="2"/></svg>
<div class="a" style="left:417px;top:40px;line-height:14px;">场</div>
<input type="checkbox" class="k" style="left:433px;top:38px;">
<div class="a" style="left:450px;top:40px;line-height:14px;">同主</div>
<input type="checkbox" class="k" style="left:473px;top:38px;" checked>
<div class="a" style="left:486px;top:40px;line-height:14px;">亚冠精英</div>
<input type="checkbox" class="k" style="left:534px;top:38px;" checked>
<div class="a" style="left:547px;top:40px;line-height:14px;">东盟锦标</div>
<input type="checkbox" class="k" style="left:595px;top:38px;" checked>
<div class="a" style="left:608px;top:40px;line-height:14px;">泰超</div>
<input type="checkbox" class="k" style="left:632px;top:38px;" checked>
<div class="a" style="left:645px;top:40px;line-height:14px;">泰联杯</div>
<input type="checkbox" class="k" style="left:681px;top:38px;" checked>
<div class="a" style="left:694px;top:40px;line-height:14px;">泰足总</div>
<select class="s" style="left:557px;top:58px;width:61px;height:18px;"><option>Crow*</option></select>
<select class="s" style="left:625px;top:58px;width:51px;height:18px;"><option>终指</option></select>
<select class="s" style="left:738px;top:58px;width:70px;height:18px;"><option>平均值</option></select>
<select class="s" style="left:816px;top:58px;width:51px;height:18px;"><option>终指</option></select>
<select class="s" style="left:939px;top:58px;width:51px;height:18px;"><option>全场</option></select>
<div class="a" style="left:449px;top:391px;line-height:14px;">近</div>
<div class="a" style="left:464px;top:389px;width:38px;height:17px;box-sizing:border-box;border:1px solid #767676;border-radius:2px;background:#fff;"></div>
<div class="a" style="left:469px;top:389px;height:15px;line-height:15px;font-family:Liberation Serif;font-size:13.5px;color:#000;font-weight:normal;">10</div>
<svg class="a" style="left:487px;top:394px;" width="10" height="7" viewBox="0 0 10 7"><polyline points="1,1.2 5,5.2 9,1.2" fill="none" stroke="#000" stroke-width="2"/></svg>
<div class="a" style="left:507px;top:391px;line-height:14px;">场</div>
<input type="checkbox" class="k" style="left:522px;top:389px;">
<div class="a" style="left:539px;top:391px;line-height:14px;">同客</div>
<input type="checkbox" class="k" style="left:567px;top:389px;" checked>
<div class="a" style="left:580px;top:391px;line-height:14px;">泰超</div>
<input type="checkbox" class="k" style="left:604px;top:389px;" checked>
<div class="a" style="left:617px;top:391px;line-height:14px;">泰联杯</div>
<select class="s" style="left:537px;top:409px;width:60px;height:18px;"><option>Crow*</option></select>
<select class="s" style="left:606px;top:409px;width:50px;height:18px;"><option>终指</option></select>
<select class="s" style="left:728px;top:409px;width:69px;height:18px;"><option>平均值</option></select>
<select class="s" style="left:806px;top:409px;width:50px;height:18px;"><option>终指</option></select>
<select class="s" style="left:937px;top:409px;width:50px;height:18px;"><option>全场</option></select>
</body></html>
